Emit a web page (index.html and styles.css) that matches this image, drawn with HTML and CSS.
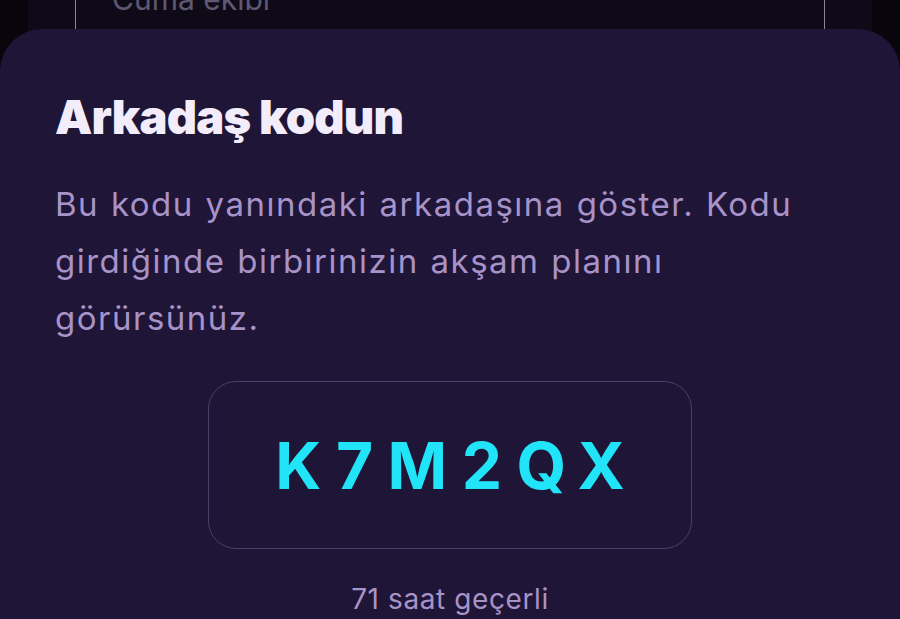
FILE: index.html
```html
<!DOCTYPE html>
<html lang="tr">
<head>
<meta charset="utf-8">
<link rel="stylesheet" href="styles.css">
</head>
<body>
<div class="screen">
  <div class="behind">
    <div class="field"><span class="field-text">Cuma ekibi</span></div>
  </div>
  <div class="sheet">
    <h1 class="title">Arkadaş kodun</h1>
    <p class="desc">Bu kodu yanındaki arkadaşına göster. Kodu<br>girdiğinde birbirinizin akşam planını<br>görürsünüz.</p>
    <div class="code-box"><span class="code">K7M2QX</span></div>
    <p class="valid">71 saat geçerli</p>
  </div>
</div>
</body>
</html>
```
FILE: styles.css
```css
html, body {
  margin: 0;
  padding: 0;
  background: #08060c;
  width: 900px;
  height: 619px;
  overflow: hidden;
}
.screen {
  position: relative;
  width: 900px;
  height: 619px;
  overflow: hidden;
  font-family: Inter, "Noto Sans", sans-serif;
}
.behind {
  display: flow-root;
  margin: 0 28px;
  height: 100%;
  background: #0f0a18;
  padding: 0 47px;
}
.field {
  margin-top: -40px;
  height: 140px;
  border: 1.5px solid #8a8494;
  border-top: none;
  border-radius: 0 0 14px 14px;
  padding: 24px 36px 0;
  box-sizing: border-box;
}
.field-text {
  display: block;
  font-size: 30px;
  color: #5e5870;
  line-height: 1;
}
.sheet {
  position: absolute;
  left: 0;
  right: 0;
  top: 29px;
  bottom: 0;
  background: #1f1536;
  border-radius: 42px 42px 0 0;
  padding: 0 55px;
  display: flex;
  flex-direction: column;
}
.title {
  margin: 58px 0 0;
  font-size: 47px;
  font-weight: 900;
  letter-spacing: -0.8px;
  color: #f2ecfb;
  line-height: 60px;
}
.desc {
  margin: 29px 0 0;
  font-size: 33px;
  line-height: 57px;
  color: #a893c9;
  font-weight: 400;
  letter-spacing: 1.5px;
  word-spacing: 1px;
  white-space: nowrap;
}
.code-box {
  align-self: center;
  margin-top: 34px;
  width: 484px;
  height: 168px;
  box-sizing: border-box;
  border: 1.5px solid #4d3f69;
  border-radius: 28px;
  display: flex;
  align-items: center;
  justify-content: center;
}
.code {
  font-size: 64px;
  font-weight: 700;
  color: #22e4f8;
  letter-spacing: 14.5px;
  margin-right: -14.5px;
}
.valid {
  margin: 30px 0 0;
  text-align: center;
  font-size: 28px;
  color: #a893c9;
  line-height: 40px;
  letter-spacing: 0.6px;
}
```
